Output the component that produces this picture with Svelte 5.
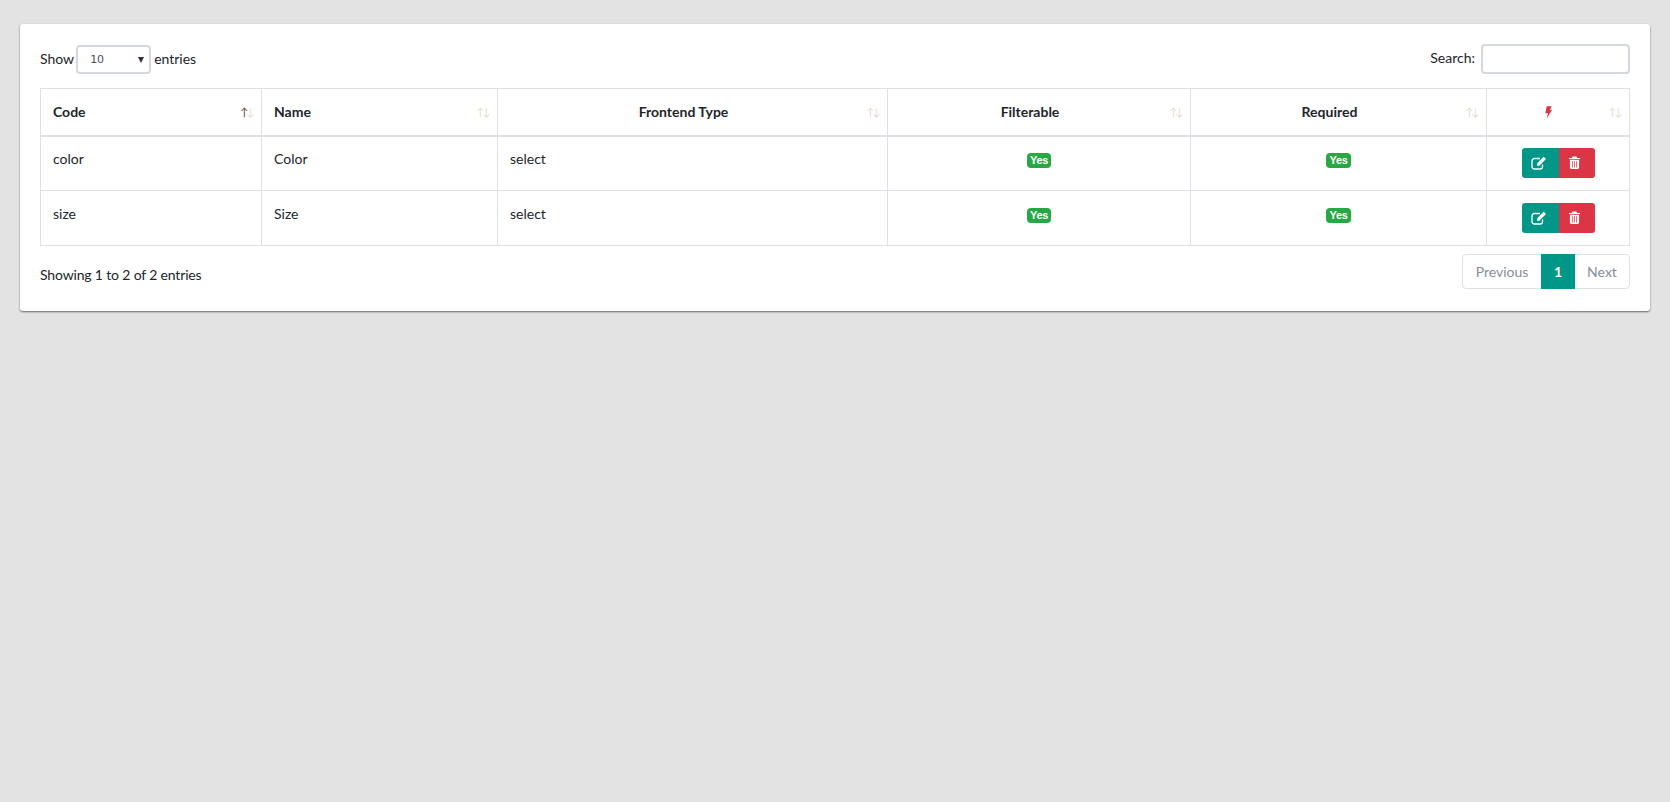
<script>
  const columns = [
    { label: 'Code', cls: 'c1', left: true, active: true },
    { label: 'Name', cls: 'c2', left: true },
    { label: 'Frontend Type', cls: 'c3' },
    { label: 'Filterable', cls: 'c4' },
    { label: 'Required', cls: 'c5' }
  ];
  const rows = [
    { code: 'color', name: 'Color', type: 'select' },
    { code: 'size', name: 'Size', type: 'select' }
  ];
</script>

<div class="page">
  <section class="card">
    <div class="top">
      <label class="show"><span class="lbl">Show</span>
        <span class="pick"><select><option>10</option><option>25</option></select></span>
        <span class="lbl">entries</span></label>
      <label class="search"><span class="lbl up">Search:</span> <input type="search" /></label>
    </div>

    <table>
      <thead>
        <tr>
          {#each columns as c}
            <th class={c.cls} class:left={c.left}>{c.label}<span class="sort" class:active={c.active}><i>↑</i><i>↓</i></span></th>
          {/each}
          <th class="c6">
            <svg class="bolt" viewBox="0 0 10 14" width="9" height="13"><path d="M3 0H8.500L6.500 4.500 9 4 3 14 4.500 7.500 1.500 8z" /></svg>
            <span class="sort"><i>↑</i><i>↓</i></span>
          </th>
        </tr>
      </thead>
      <tbody>
        {#each rows as r}
          <tr>
            <td>{r.code}</td>
            <td>{r.name}</td>
            <td>{r.type}</td>
            <td class="mid"><span class="badge">Yes</span></td>
            <td class="mid"><span class="badge">Yes</span></td>
            <td class="mid actions">
              <div class="group">
                <button class="edit" aria-label="Edit">
                  <svg viewBox="0 0 16 14" width="16" height="14">
                    <path class="outline" d="M11.500 8.500v2.200a2.300 2.300 0 0 1-2.300 2.300H3.300A2.300 2.300 0 0 1 1 10.700V4.800a2.300 2.300 0 0 1 2.300-2.300H9" />
                    <path class="solid" d="M12.700 0.800l2.300 2.300-6.700 6.700H6v-2.300z" />
                  </svg>
                </button>
                <button class="del" aria-label="Delete">
                  <svg viewBox="0 0 12 14" width="11" height="13">
                    <path class="solid" d="M4 0.500h4l1 1.500h3v1.300H0V2h3zM1 4h10v8.500a1.500 1.500 0 0 1-1.500 1.500h-7A1.500 1.500 0 0 1 1 12.500z" />
                    <path class="slot" d="M3.800 5.500v7M6 5.500v7M8.200 5.500v7" />
                  </svg>
                </button>
              </div>
            </td>
          </tr>
        {/each}
      </tbody>
    </table>

    <div class="bottom">
      <div class="info">Showing 1 to 2 of 2 entries</div>
      <nav class="pager">
        <span class="prev">Previous</span>
        <span class="cur">1</span>
        <span class="next">Next</span>
      </nav>
    </div>
  </section>
</div>

<style>
  :global(body) {
    margin: 0;
    background: #e3e3e3;
  }
  .page {
    min-height: 802px;
    box-sizing: border-box;
    padding: 24px 20px 0;
    font-family: Lato, "Open Sans", sans-serif;
    font-size: 14px;
    color: #212529;
  }
  .card {
    background: #fff;
    border-radius: 3px;
    box-shadow: 0 1px 2px rgba(0, 0, 0, 0.55);
    padding: 20px;
    height: 287px;
    box-sizing: border-box;
  }
  .top {
    display: flex;
    justify-content: space-between;
    align-items: center;
    height: 30px;
    margin-bottom: 14px;
  }
  .show,
  .search {
    display: flex;
    align-items: center;
    gap: 2px;
  }
  .search {
    gap: 6px;
  }
  .lbl {
    margin-bottom: 1px;
  }
  .lbl:last-child {
    margin-left: 1px;
  }
  .lbl.up {
    margin: 0 0 3px -1px;
  }
  .pick {
    position: relative;
    display: block;
    height: 29px;
  }
  .pick::after {
    content: "";
    position: absolute;
    right: 7px;
    top: 12px;
    border-style: solid;
    border-width: 6px 3px 0;
    border-color: #3a2b3a transparent transparent;
    pointer-events: none;
  }
  select {
    display: block;
    appearance: none;
    width: 75px;
    height: 29px;
    box-sizing: border-box;
    border: 2px solid #d3d7de;
    border-radius: 4px;
    background: #fff;
    color: #495057;
    font-family: "DejaVu Sans", sans-serif;
    font-size: 11px;
    padding: 1px 0 0 12px;
  }
  input {
    width: 149px;
    height: 30px;
    box-sizing: border-box;
    border: 2px solid #d3d7de;
    border-radius: 4px;
    outline: none;
    background: #fff;
  }
  table {
    width: 1590px;
    table-layout: fixed;
    border-collapse: collapse;
    border: 1px solid #dee2e6;
  }
  th {
    position: relative;
    height: 47px;
    padding: 0 30px 0 12px;
    box-sizing: border-box;
    border: 1px solid #dee2e6;
    border-bottom-width: 2px;
    font-weight: 700;
    text-align: center;
  }
  th.left {
    text-align: left;
  }
  .c1 { width: 221px; }
  .c2 { width: 236px; }
  .c3 { width: 390px; }
  .c4 { width: 303px; }
  .c5 { width: 296px; }
  td {
    height: 55px;
    padding: 0 12px 10px;
    box-sizing: border-box;
    border: 1px solid #dee2e6;
  }
  td.mid {
    text-align: center;
  }
  .sort {
    position: absolute;
    right: 9px;
    top: 14px;
    display: flex;
    font-weight: 400;
    font-size: 11px;
    line-height: 18px;
  }
  .sort i {
    font-style: normal;
    width: 6px;
    text-align: center;
    opacity: 0.3;
    color: #a88a4a;
  }
  .sort.active i:first-child {
    opacity: 1;
    color: #5c4a20;
  }
  .bolt {
    display: block;
    margin: 1px 0 0 45px;
    fill: #dc3545;
  }
  .badge {
    display: inline-block;
    background: #28a745;
    color: #fff;
    font-family: "Liberation Sans", sans-serif;
    font-size: 11px;
    font-weight: 700;
    line-height: 15px;
    padding: 0 3px;
    border-radius: 4px;
    letter-spacing: -0.3px;
    position: relative;
    top: 1px;
  }
  td.actions {
    padding: 0;
  }
  .group {
    display: inline-flex;
    vertical-align: top;
    margin-left: 1px;
  }
  .group button {
    height: 30px;
    border: 0;
    display: flex;
    align-items: center;
    justify-content: center;
  }
  .edit {
    width: 37px;
    padding: 0 3px 1px 0;
    background: #009688;
    border-radius: 3px 0 0 3px;
  }
  .del {
    width: 36px;
    padding: 0 6px 1px 0;
    background: #dc3545;
    border-radius: 0 3px 3px 0;
  }
  .outline {
    fill: none;
    stroke: #fff;
    stroke-width: 1.300;
  }
  .solid {
    fill: #fff;
  }
  .slot {
    fill: none;
    stroke: #dc3545;
    stroke-width: 0.800;
  }
  .bottom {
    display: flex;
    justify-content: space-between;
    align-items: center;
    margin-top: 8px;
  }
  .info {
    padding-top: 5px;
    letter-spacing: -0.16px;
  }
  .pager {
    display: flex;
    height: 35px;
    box-sizing: border-box;
    border: 1px solid #dee2e6;
    border-radius: 4px;
    color: #868e96;
    line-height: 33px;
  }
  .prev {
    width: 78px;
    text-align: center;
  }
  .cur {
    width: 34px;
    margin: -1px 0;
    height: 35px;
    line-height: 35px;
    text-align: center;
    background: #009688;
    color: #fff;
    font-weight: 700;
  }
  .next {
    width: 54px;
    text-align: center;
  }
</style>
